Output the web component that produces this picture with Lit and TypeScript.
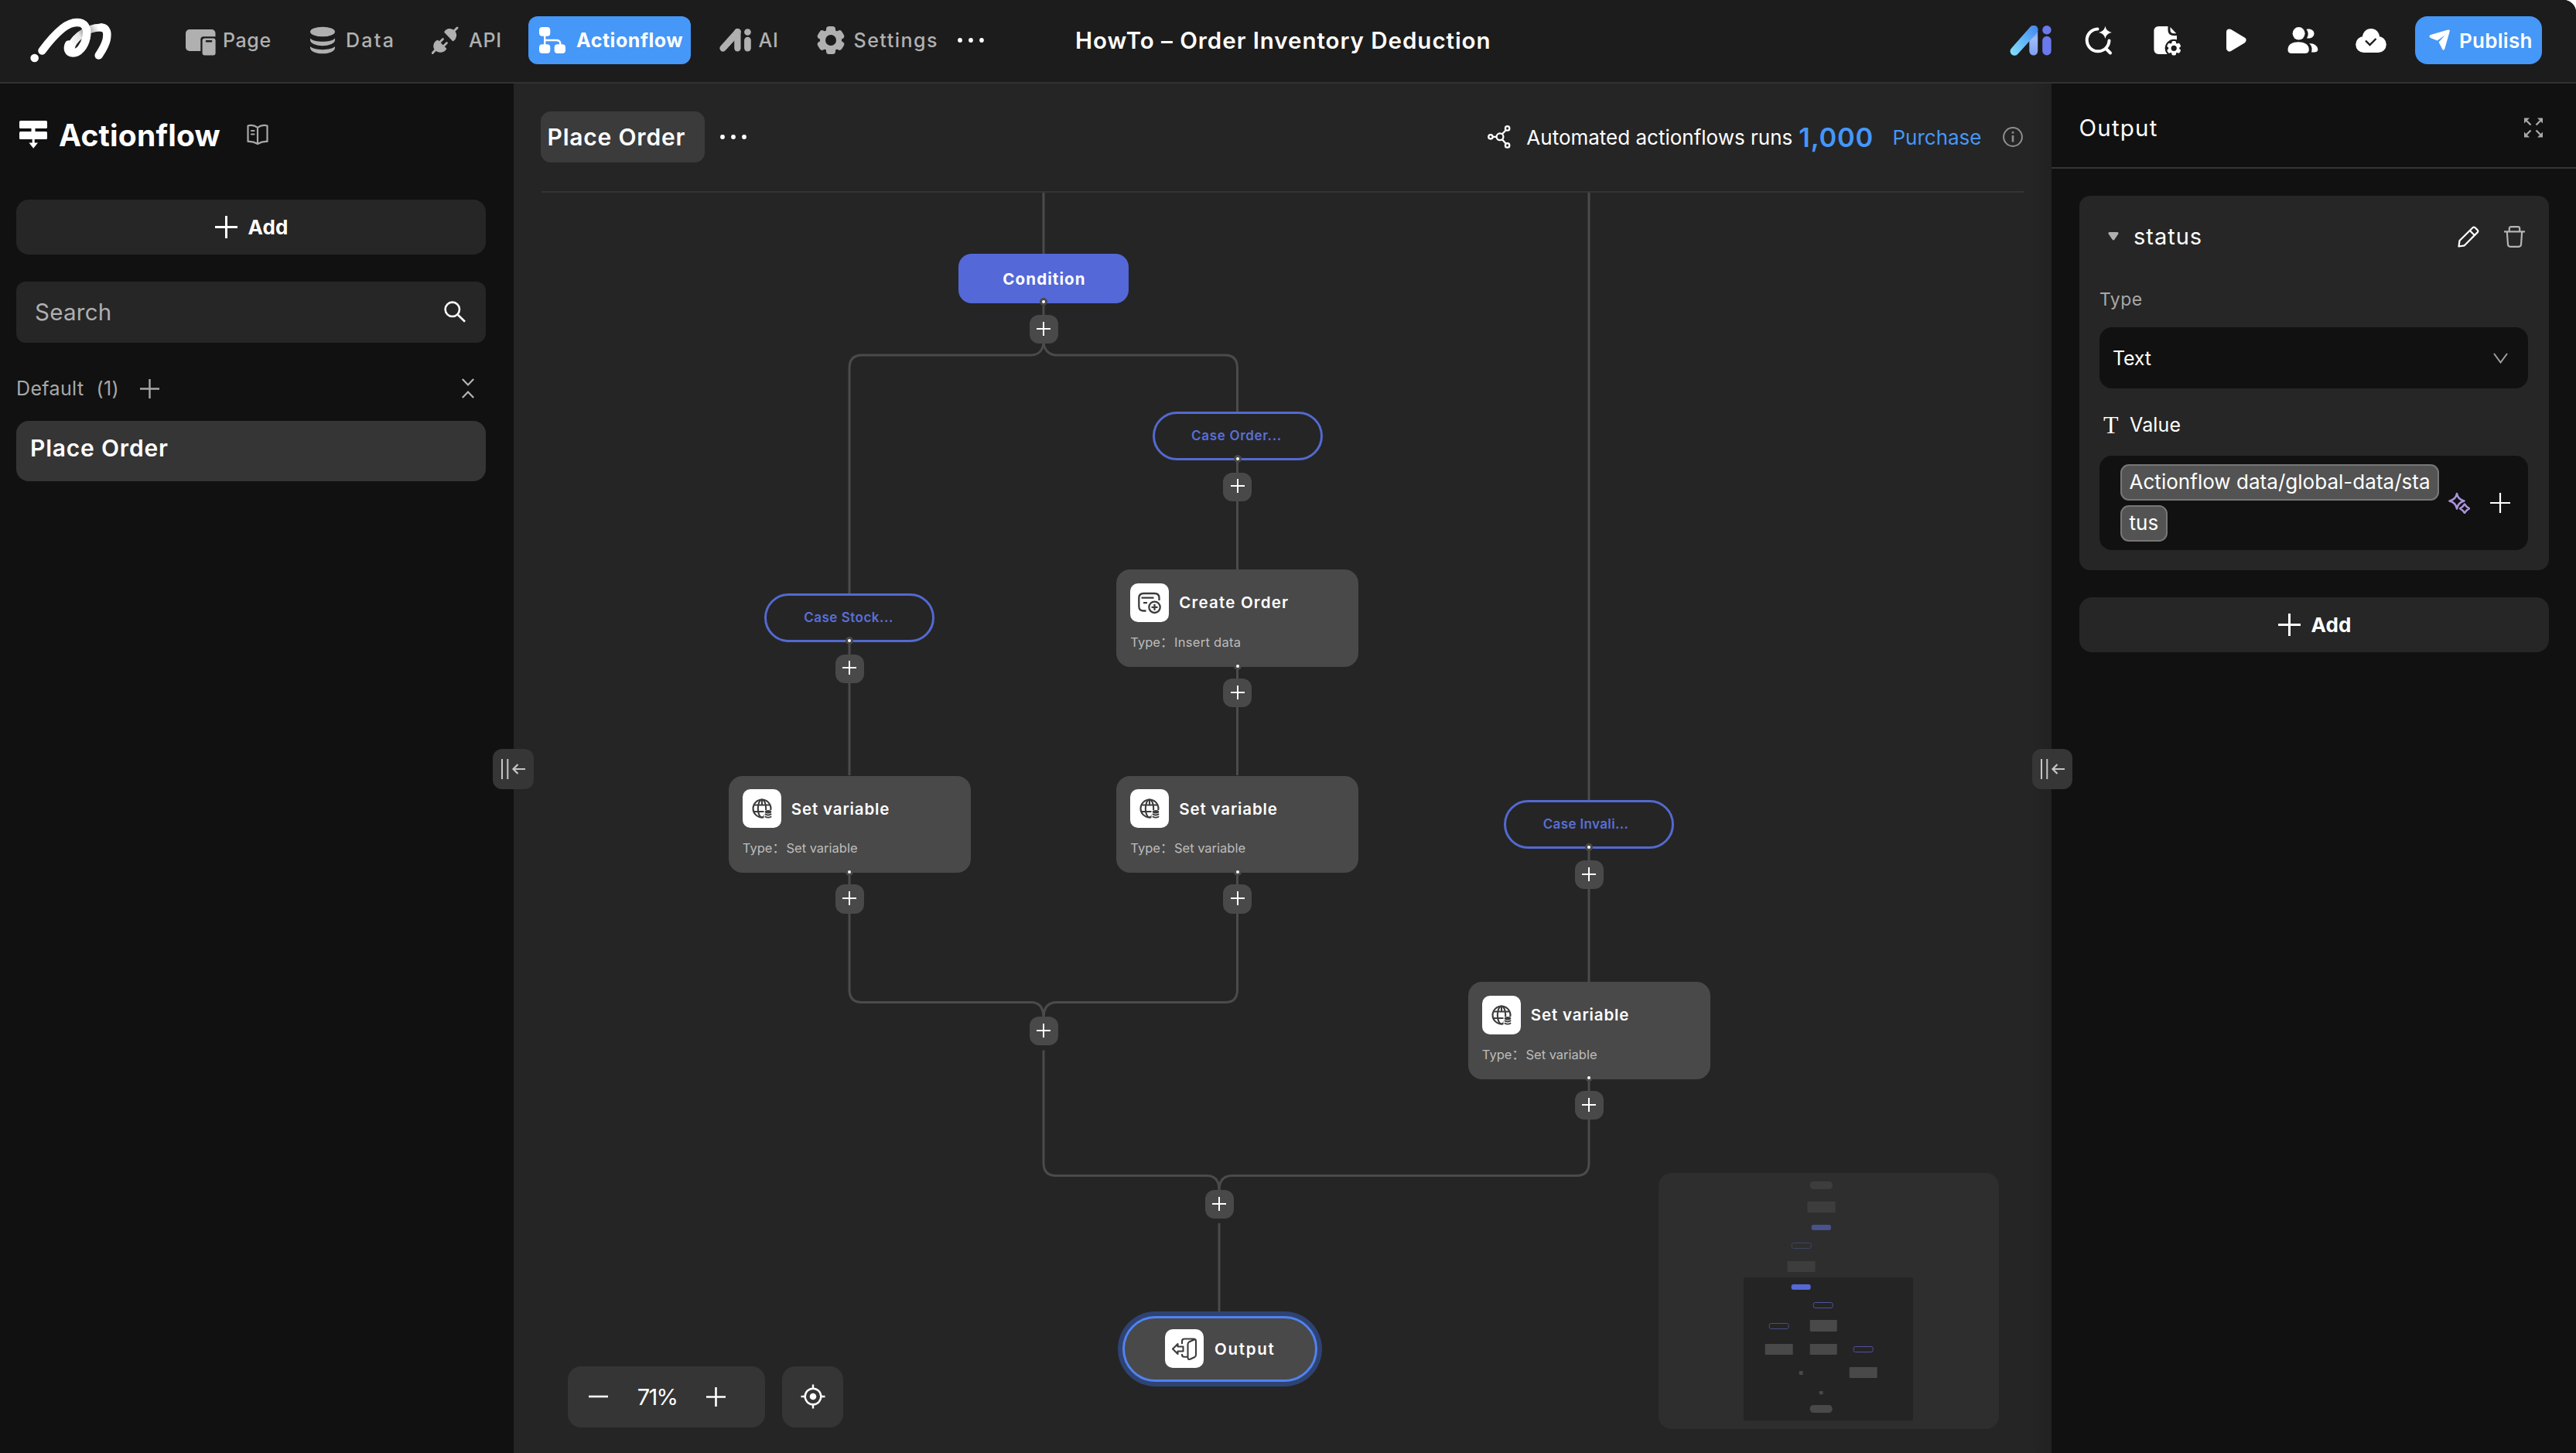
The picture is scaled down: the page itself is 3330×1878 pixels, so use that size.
import { LitElement, html, css, svg } from "lit";
import { customElement, property } from "lit/decorators.js";
import { styleMap } from "lit/directives/style-map.js";

/* ---------- icons ---------- */

const gearTeeth = (r: number, w: number) =>
  [0, 60, 120, 180, 240, 300].map(
    (a) => svg`<rect x=${-w / 2} y=${-r} width=${w} height=${r} rx=${w * 0.32} transform="rotate(${a})"></rect>`
  );

const aiMark = (w: number, h: number, diagonal: string, leg: string, dot: string) => html`
  <svg width=${w} height=${h} viewBox="0.6 4.8 41.4 30">
    <defs>
      <linearGradient id="aiDiag" x1="0" y1="1" x2="1" y2="0">
        <stop offset="0" stop-color="#86e2f8"></stop>
        <stop offset="0.55" stop-color="#5fb0f8"></stop>
        <stop offset="1" stop-color="#4482ee"></stop>
      </linearGradient>
      <linearGradient id="aiLeg" x1="0" y1="0" x2="0" y2="1">
        <stop offset="0" stop-color="#5a93f2"></stop>
        <stop offset="0.45" stop-color="#9fbcf6"></stop>
        <stop offset="1" stop-color="#7f9ff2"></stop>
      </linearGradient>
    </defs>
    <rect x="20" y="5" width="8.4" height="29.4" rx="4.2" fill=${leg}></rect>
    <path d="M1.9 27.6 L20.6 6.6 A4.3 4.3 0 0 1 28.2 10.6 Q27.6 12 26.4 13.4 L8.6 33 A4.3 4.3 0 0 1 1.9 27.6Z" fill=${diagonal}></path>
    <circle cx="37.4" cy="9.2" r="4.4" fill=${dot}></circle>
    <rect x="33" y="15.4" width="8.8" height="19" rx="4.4" fill=${dot}></rect>
  </svg>`;

const plus = (size: number, stroke: number) => html`
  <svg width=${size} height=${size} viewBox="0 0 ${size} ${size}">
    <path d="M${size / 2} 0V${size}M0 ${size / 2}H${size}" stroke="currentColor" stroke-width=${stroke} fill="none"></path>
  </svg>`;

const icons = {
  logo: html`<svg width="110" height="62" viewBox="36 21 110 62" fill="none" stroke-linecap="round">
    <defs>
      <linearGradient id="fold" gradientUnits="userSpaceOnUse" x1="92" y1="60" x2="132" y2="34">
        <stop offset="0" stop-color="#ffffff"></stop>
        <stop offset="0.35" stop-color="#e4e4e4"></stop>
        <stop offset="0.55" stop-color="#8c8c8c"></stop>
        <stop offset="0.85" stop-color="#f2f2f2"></stop>
        <stop offset="1" stop-color="#ffffff"></stop>
      </linearGradient>
    </defs>
    <path d="M92 62C92 54 108 35.600 131 35.400" stroke="url(#fold)" stroke-width="10"></path>
    <path d="M54.500 65.500C60 58 71 44.500 81 36.500C90 29.500 97 28.300 102.500 29.200C112 31 113.500 40 111.500 49C109 60 102 68.500 94.500 68.500C88 68.500 86.500 63 89 57.500" stroke="#fff" stroke-width="10.500"></path>
    <path d="M131 35.400C138.500 36 139.500 43 137.500 52C135.500 60 131.500 65.500 127.700 71.500" stroke="#fff" stroke-width="10.500"></path>
    <circle cx="44.700" cy="75" r="5.300" fill="#fff"></circle>
  </svg>`,
  page: html`<svg width="40" height="40" viewBox="0 0 40 40">
    <rect y="6" width="38.500" height="28" rx="5" fill="currentColor"></rect>
    <rect x="19.300" y="15.300" width="22" height="27" rx="4" fill="#1c1c1c"></rect>
    <rect x="21.600" y="17.600" width="17" height="21.800" rx="3" fill="currentColor"></rect>
    <rect x="25.800" y="20" width="8.500" height="2.600" rx="1" fill="#1c1c1c"></rect>
  </svg>`,
  data: html`<svg width="32" height="40" viewBox="0 0 32 40" fill="currentColor">
    <ellipse cx="16" cy="9" rx="16" ry="6.300"></ellipse>
    <path d="M0 17.500C5 23.300 27 23.300 32 17.500V20C31 29.500 1 29.500 0 20Z"></path>
    <path d="M0 28C5 33.500 27 33.500 32 28V30C31 39.800 1 39.800 0 30Z"></path>
  </svg>`,
  api: html`<svg width="36" height="40" viewBox="0 0 36 40" fill="currentColor" stroke="currentColor" stroke-linecap="round" stroke-linejoin="round">
    <path d="M17 9.500C19 5.500 25 4 29 8C33 12 31.500 18 27.500 20.500Z" stroke-width="1.500"></path>
    <path d="M8 20.500L18.500 31C15.500 35.500 9 36.500 5 32.500C1 28.500 3.500 22 8 20.500Z" stroke-width="1.500"></path>
    <path d="M29 8L33 4M5 32.500L1.200 36.500" stroke-width="3"></path>
    <path d="M10.500 22.500L14.500 18.500M15.500 27.500L19.500 23.500" stroke-width="2.800"></path>
  </svg>`,
  flow: html`<svg width="34" height="40" viewBox="0 0 34 40" fill="#fff">
    <rect y="3" width="14.300" height="11.800" rx="4"></rect>
    <rect y="25.300" width="14.300" height="11.800" rx="4"></rect>
    <rect x="19.700" y="25.300" width="14.300" height="11.800" rx="4"></rect>
    <path d="M7.200 12V27M7.200 20H22Q27.300 20 27.300 24.500V27" fill="none" stroke="#fff" stroke-width="2.400"></path>
  </svg>`,
  gear: html`<svg width="38" height="40" viewBox="-19 -20 38 40">
    <g fill="currentColor">${gearTeeth(18, 12)}<circle r="14"></circle></g>
    <circle r="7" fill="#1c1c1c"></circle>
  </svg>`,
  dots: html`<svg width="34" height="8" viewBox="0 0 34 8" fill="#fff">
    <circle cx="3" cy="4" r="2.900"></circle><circle cx="17" cy="4" r="2.900"></circle><circle cx="31" cy="4" r="2.900"></circle>
  </svg>`,
  refine: html`<svg width="40" height="40" viewBox="0 0 40 40" fill="none" stroke="#fff" stroke-width="4">
    <path d="M18.500 5.500A14.400 14.400 0 1 0 33.500 20.500" stroke-linecap="round"></path>
    <path d="M29.500 31L35 36.500" stroke-linecap="round"></path>
    <path d="M28.400 1.800Q29.500 8.500 36.800 9.900Q29.500 11.300 28.400 18Q27.300 11.300 20.200 9.900Q27.300 8.500 28.400 1.800Z" fill="#fff" stroke="none"></path>
  </svg>`,
  file: html`<svg width="40" height="40" viewBox="0 0 40 40">
    <path d="M9.500 2H21.500V7.500Q22 14 28.500 14H33V38H9.500Q3.400 38 3.400 31.500V8.500Q3.400 2 9.500 2Z" fill="#fff"></path>
    <path d="M24.500 3L32.300 11.200H28.500Q24.500 11 24.500 6.500Z" fill="#fff"></path>
    <g transform="translate(29.200 30.300)">
      <circle r="11.500" fill="#1c1c1c"></circle>
      <g fill="#fff">${gearTeeth(9.3, 5.6)}<circle r="7"></circle></g>
      <circle r="3.600" fill="#1c1c1c"></circle>
    </g>
  </svg>`,
  play: html`<svg width="40" height="40" viewBox="-1.500 0 40 40">
    <path d="M11.500 9.500L29 20L11.500 30.500Z" fill="#fff" stroke="#fff" stroke-width="8" stroke-linejoin="round"></path>
  </svg>`,
  users: html`<svg width="40" height="40" viewBox="0 0 40 40" fill="#fff">
    <ellipse cx="14.600" cy="11.300" rx="8" ry="8.300"></ellipse>
    <path d="M0.500 32C0.500 25 7 22.300 14 22.300C21 22.300 27.800 25 27.800 32C27.800 36 25.500 37 22 37H6C2.500 37 0.500 36 0.500 32Z"></path>
    <path d="M24.500 6C30 4.500 34.500 7.500 34.500 11.500C34.500 15.500 30.500 18.500 25 17.200C27.500 13.500 27.200 9.500 24.500 6Z"></path>
    <path d="M28 24C34.500 24 39.300 27.500 39.300 32C39.300 35 37 35.500 31 35.500C32.300 31 31.500 27 28 24Z"></path>
  </svg>`,
  cloud: html`<svg width="40" height="40" viewBox="0 0 40 40">
    <g fill="#fff"><circle cx="20" cy="16" r="11"></circle><circle cx="10.700" cy="25.500" r="10.500"></circle><circle cx="29.300" cy="25.500" r="10.500"></circle><rect x="10" y="20" width="20" height="16"></rect></g>
    <path d="M13 20.500L18.500 26L26.500 18" fill="none" stroke="#1c1c1c" stroke-width="2.400"></path>
  </svg>`,
  plane: html`<svg width="27" height="28" viewBox="0 0 27 28" fill="#fff">
    <path d="M2 7L24.500 0.600Q27.400 0 26.600 3L20.300 25Q19 28.300 17.200 25.500L12.600 16.600L20.600 7.400L10.700 14.600L2 10.900Q-1.200 8.800 2 7Z"></path>
  </svg>`,
  actionflow: html`<svg width="36" height="36" viewBox="0 0 36 36" fill="#fff">
    <rect width="36" height="10" rx="1.500"></rect>
    <rect y="14" width="36" height="10" rx="1.500"></rect>
    <path d="M15.500 9H20.500V15H15.500ZM16.700 23H19.700V28.500H24L18.200 35.800L12.400 28.500H16.700Z"></path>
  </svg>`,
  book: html`<svg width="28" height="28" viewBox="0 0 28 28" fill="none" stroke="#a8a8a8" stroke-width="2.200" stroke-linejoin="round" stroke-linecap="round">
    <path d="M14 4.800Q8 0.500 1.500 2.500V23Q8 22.500 14 26Q20 22.500 26.500 23V2.500Q20 0.500 14 4.800ZM14 4.800V26"></path>
    <path d="M6 9H9.500M6 13.500H9.500"></path>
  </svg>`,
  search: html`<svg width="28" height="28" viewBox="0 0 28 28" fill="none" stroke="#fff" stroke-width="2.600">
    <circle cx="10.800" cy="10.800" r="9.200"></circle><path d="M17.500 17.500L27 26.800"></path>
  </svg>`,
  collapse: html`<svg width="16" height="26" viewBox="0 0 16 26" fill="none" stroke="#b4b4b4" stroke-width="2.200">
    <path d="M0.800 0.900L8 8.400L15.200 0.900M0.800 25.100L8 17.600L15.200 25.100"></path>
  </svg>`,
  share: html`<svg width="30" height="30" viewBox="0 0 30 30" fill="none" stroke="#fff" stroke-width="2.300">
    <circle cx="3.900" cy="14.800" r="2.700"></circle><circle cx="16" cy="14.800" r="4.400"></circle>
    <circle cx="25.600" cy="3.900" r="2.700"></circle><circle cx="25.600" cy="25.900" r="2.700"></circle>
    <path d="M6.600 14.800H11.600M18.900 11.300L23.800 6M18.900 18.300L23.800 23.800"></path>
  </svg>`,
  info: html`<svg width="26" height="26" viewBox="0 0 26 26" fill="none" stroke="#8f8f8f">
    <circle cx="13" cy="13" r="11.900" stroke-width="2"></circle>
    <path d="M13 11V19.500M13 6V8.600" stroke-width="2.600"></path>
  </svg>`,
  expand: html`<svg width="24" height="26" viewBox="0 0 24 26" fill="#a8a8a8" stroke="#a8a8a8">
    <path d="M3 4L8.500 9.500M21 4L15.500 9.500M3 22L8.500 16.500M21 22L15.500 16.500" stroke-width="2.400"></path>
    <path d="M0 0.500H7L0 7.500ZM24 0.500H17L24 7.500ZM0 25.500H7L0 18.500ZM24 25.500H17L24 18.500Z" stroke="none"></path>
  </svg>`,
  edit: html`<svg width="28" height="28" viewBox="0 0 28 28" fill="none" stroke="#fff" stroke-width="2.200" stroke-linejoin="round">
    <path d="M1.500 26.500L2.500 19L19.500 2.300Q21 0.800 22.600 2.300L25.700 5.400Q27 6.900 25.600 8.400L8.800 25.300ZM15.800 6L22 12.200"></path>
  </svg>`,
  trash: html`<svg width="27" height="28" viewBox="0 0 27 28" fill="none" stroke="#b4b4b4" stroke-width="2.200">
    <path d="M0 7.300H27M6.800 7V3.500Q6.800 1.200 9 1.200H18Q20.200 1.200 20.200 3.500V7M3.800 7.500L5 24Q5.200 26.800 8 26.800H19Q21.800 26.800 22 24L23.200 7.500"></path>
  </svg>`,
  chevron: html`<svg width="19" height="14" viewBox="0 0 19 14" fill="none" stroke="#a0a0a0" stroke-width="2">
    <path d="M1 1L9.500 12.500L18 1"></path>
  </svg>`,
  caret: html`<svg width="14" height="11" viewBox="0 0 14 11" fill="#b0b0b0">
    <path d="M2 0H12Q14.500 0.300 13.200 2.600L8.500 9.600Q7 11.500 5.500 9.600L0.800 2.600Q-0.500 0.300 2 0Z"></path>
  </svg>`,
  sparkles: html`<svg width="28" height="28" viewBox="0 0 28 28" fill="none" stroke="#ab93df" stroke-width="2.500" stroke-linejoin="round">
    <path d="M11 2Q12.300 9.500 20.500 11.500Q12.300 13.500 11 21.500Q9.700 13.500 1.500 11.500Q9.700 9.500 11 2Z"></path>
    <path d="M21 15.500L23.500 18.800L27 21.300L23.500 23.800L21 27L18.500 23.800L15 21.300L18.500 18.800Z"></path>
  </svg>`,
  panel: html`<svg width="32" height="28" viewBox="0 0 32 28" fill="none" stroke="#c6c6c6" stroke-width="2">
    <path d="M2 1V27M9.300 1V27"></path><path d="M32 14H16.500M22.500 8L16.500 14L22.500 20" stroke-width="2.200"></path>
  </svg>`,
  locate: html`<svg width="34" height="34" viewBox="0 0 34 34" fill="none" stroke="#fff">
    <circle cx="17" cy="17" r="10.300" stroke-width="2.400"></circle><circle cx="17" cy="17" r="4.300" fill="#fff" stroke="none"></circle>
    <path d="M17 1.500V7M17 27V32.500M1.500 17H7M27 17H32.500" stroke-width="2.400"></path>
  </svg>`,
  insert: html`<svg width="50" height="50" viewBox="0 0 50 50" fill="none" stroke="#3c3c3c" stroke-width="2.300">
    <path d="M37.500 22V19Q37.500 13 31.500 13H17.500Q11.300 13 11.300 19V29.500Q11.300 35.500 17.500 35.500H20.500M14.500 18.700H30.500M17 25.200H22"></path>
    <circle cx="31.500" cy="30.800" r="7.200"></circle><path d="M31.500 26.800V34.800M27.500 30.800H35.500"></path>
  </svg>`,
  globe: html`<svg width="50" height="50" viewBox="0 0 50 50" fill="none" stroke="#3c3c3c" stroke-width="2.100">
    <circle cx="25" cy="25" r="11.500"></circle><ellipse cx="25" cy="25" rx="5.200" ry="11.500"></ellipse>
    <path d="M14.800 20.500H35.200M14.800 29H35.200M25 13.500V20"></path>
    <path d="M27.500 27H40V41H27.500Z" fill="#fff" stroke="none"></path>
    <ellipse cx="33" cy="29.200" rx="4.200" ry="2.300" fill="#3c3c3c" stroke="none"></ellipse>
    <path d="M28.800 32Q33 35 37.200 32M28.800 35.200Q33 38.200 37.200 35.200" stroke-width="1.800"></path>
  </svg>`,
  output: html`<svg width="50" height="50" viewBox="0 0 50 50" fill="none" stroke="#3c3c3c" stroke-width="2.100" stroke-linejoin="round">
    <path d="M22 19V15.500Q22 12.500 25 12.500H37Q40 12.500 40 15.500V33Q40 35 38.500 36L32.500 38.800Q29.500 39.500 29.500 36.500V19.500Q29.500 17.500 31 16.500L38.800 13M22 32V33Q22 35.800 25 35.800H29.500"></path>
    <path d="M10 25.500L16.500 19V22.500H23.500V28.500H16.500V32Z"></path>
  </svg>`,
};

/* ---------- flow data ---------- */

type Kind = "condition" | "case" | "card" | "output";
interface FlowNode { kind: Kind; x: number; y: number; title: string; type?: string; icon?: "insert" | "globe"; cls?: string; }

const NODES: FlowNode[] = [
  { kind: "condition", x: 575, y: 79, title: "Condition" },
  { kind: "case", x: 825.5, y: 283, title: "Case Order...", cls: "order" },
  { kind: "case", x: 324, y: 518, title: "Case Stock...", cls: "stock" },
  { kind: "case", x: 1280, y: 785, title: "Case Invali...", cls: "invalid" },
  { kind: "card", x: 779, y: 487, title: "Create Order", type: "Insert data", icon: "insert", cls: "create" },
  { kind: "card", x: 277.5, y: 753.5, title: "Set variable", type: "Set variable", icon: "globe" },
  { kind: "card", x: 779, y: 753.5, title: "Set variable", type: "Set variable", icon: "globe" },
  { kind: "card", x: 1233.5, y: 1020, title: "Set variable", type: "Set variable", icon: "globe" },
  { kind: "output", x: 786.5, y: 1451.5, title: "Output" },
];

const HANDLES: [number, number][] = [
  [685, 140.8], [935.5, 344.4], [434, 579], [935.5, 611.5], [434, 877.5],
  [935.5, 877.5], [1390, 845.6], [1390, 1143.7],
];

const ADD_BUTTONS: [number, number][] = [
  [685, 176.5], [935.5, 380.3], [434, 615.3], [935.5, 646.5], [434, 913],
  [935.5, 913], [685, 1083.5], [1390, 881.5], [1390, 1179.5], [912, 1307.5],
];

const EDGES = [
  "M685 0V79M685 141V160",
  "M685 192C685 203 679 210 669 210H450Q434 210 434 227V518",
  "M685 192C685 203 692 210 702 210H920Q935.500 210 935.500 227V283",
  "M935.500 346V487M935.500 612V753",
  "M434 580V753M434 878V1030Q434 1046.500 450 1046.500H669Q685 1046.500 685 1067",
  "M935.500 878V1030Q935.500 1046.500 920 1046.500H702Q685 1046.500 685 1067",
  "M685 1108.500V1254Q685 1270.500 701 1270.500H896Q912 1270.500 912 1290",
  "M1390 0V785M1390 847V1020M1390 1145V1254Q1390 1270.500 1374 1270.500H929Q912 1270.500 912 1290",
  "M912 1332V1452",
];

@customElement("flow-node")
class FlowNodeElement extends LitElement {
  @property({ attribute: false }) node!: FlowNode;

  static styles = css`
    :host { display: block; font-family: Inter, "Noto Sans CJK SC", sans-serif; color: #fff; }
    svg { display: block; }
    .condition, .case { display: flex; align-items: center; justify-content: center; box-sizing: border-box; width: 220px; height: 63px; white-space: nowrap; }
    .condition { background: #5468d8; border-radius: 17px; font-size: 20.500px; font-weight: 700; letter-spacing: 1.1px; height: 64px; padding-left: 2px; }
    .case { border: 3px solid #5469d0; border-radius: 32px; background: #252525; color: #596fd8; font-size: 17px; font-weight: 600; padding: 0 2px 1px 0; }
    .order { letter-spacing: 0.68px; }
    .stock { letter-spacing: 0.51px; }
    .invalid { letter-spacing: 0.36px; padding-right: 8px; }
    .card { box-sizing: border-box; width: 313px; height: 125.500px; padding: 17.500px 18.300px; border-radius: 18px; background: #494949; }
    .head { display: flex; align-items: center; gap: 13px; }
    .tile { width: 50px; height: 50px; border-radius: 10px; background: #fff; flex: none; }
    .title { font-size: 20.500px; font-weight: 600; letter-spacing: 0.85px; white-space: nowrap; }
    .create .title { letter-spacing: 1.2px; }
    .type { margin-top: 14px; line-height: 24px; font-size: 16.500px; color: #bdbdbd; white-space: nowrap; }
    .value { margin-left: 1.500px; }
    .create .value { letter-spacing: 0.3px; }
    .output { box-sizing: border-box; display: flex; align-items: center; width: 252px; height: 85.500px; padding-left: 52.500px; gap: 14px; border: 3px solid #5083f2; border-radius: 43px; background: #494949; box-shadow: 0 0 0 6px #2f4372; }
    .output .title { letter-spacing: 1.7px; }
  `;

  render() {
    const n = this.node;
    if (n.kind === "condition") return html`<div class="condition">${n.title}</div>`;
    if (n.kind === "case") return html`<div class="case ${n.cls}">${n.title}</div>`;
    if (n.kind === "output")
      return html`<div class="output"><div class="tile">${icons.output}</div><span class="title">${n.title}</span></div>`;
    return html`<div class="card ${n.cls ?? ""}">
      <div class="head"><div class="tile">${icons[n.icon!]}</div><span class="title">${n.title}</span></div>
      <div class="type">Type：<span class="value">${n.type}</span></div>
    </div>`;
  }
}

const MINI_DIM: [number, number, number, number, number, string][] = [
  [660, 111, 88, 30, 14, "#3d3d3d"], [650, 189, 109, 43, 3, "#3d3d3d"], [666, 279, 76, 21, 8, "#48528f"], [572, 420, 109, 42, 3, "#3d3d3d"],
];
const MINI_LIT: [number, number, number, number, number, string][] = [
  [588, 510, 75, 21, 8, "#5468d8"], [660, 648, 105, 45, 3, "#494949"], [486, 741, 108, 42, 3, "#494949"], [660, 741, 105, 42, 3, "#494949"],
  [813, 831, 108, 42, 3, "#494949"], [618, 846, 15, 15, 3, "#494949"], [696, 924, 15, 13, 3, "#494949"], [660, 978, 87, 30, 14, "#494949"],
];
const MINI_OUTLINE: [number, number, string][] = [
  [589.5, 349.5, "#3f4465"], [673.5, 580.5, "#4d549a"], [502.5, 661.5, "#454f88"], [829.5, 751.5, "#5450a0"],
];

@customElement("mini-map")
class MiniMap extends LitElement {
  static styles = css`:host { display: block; } svg { display: block; }`;
  render() {
    const bars = (list: typeof MINI_DIM) =>
      list.map(([x, y, w, h, r, f]) => svg`<rect x=${x} y=${y} width=${w} height=${h} rx=${r} fill=${f}></rect>`);
    return html`<svg width="440" height="331" viewBox="73 78 1320 993">
      <rect x="73" y="78" width="1320" height="993" rx="50" fill="#2e2e2e"></rect>
      ${bars(MINI_DIM)}
      <rect x="403" y="483" width="657" height="556" rx="6" fill="#242424"></rect>
      ${bars(MINI_LIT)}
      ${MINI_OUTLINE.map(([x, y, c]) => svg`<rect x=${x} y=${y} width="75" height="21" rx="7" fill="none" stroke=${c} stroke-width="3"></rect>`)}
    </svg>`;
  }
}

@customElement("flow-canvas")
class FlowCanvas extends LitElement {
  static styles = css`
    :host { display: block; position: relative; overflow: hidden; flex: 1; color: #fff; font-family: Inter, sans-serif; }
    svg { display: block; }
    .edges { position: absolute; inset: 0; }
    .at { position: absolute; }
    .add { position: absolute; display: flex; align-items: center; justify-content: center; box-sizing: border-box; width: 37px; height: 37.500px; margin: -18.750px 0 0 -18.500px; padding-bottom: 2px; border-radius: 12px; background: #494949; }
    .dot { position: absolute; box-sizing: border-box; width: 10px; height: 10px; margin: -5px 0 0 -5px; border: 3px solid #494949; border-radius: 50%; background: #fff; }
    .tools { position: absolute; left: 70px; bottom: 33px; display: flex; gap: 22px; }
    .zoom, .locate { display: flex; align-items: center; height: 79px; border-radius: 17px; background: #353535; box-sizing: border-box; padding-bottom: 1px; }
    .zoom { width: 255px; padding-left: 27px; }
    .pct { width: 127px; text-align: center; font-size: 29px; letter-spacing: -1.700px; box-sizing: border-box; }
    .locate { width: 79px; justify-content: center; }
    mini-map { position: absolute; right: 68px; bottom: 31px; }
  `;
  render() {
    const pos = (x: number, y: number) => styleMap({ left: `${x}px`, top: `${y}px` });
    return html`
      <svg class="edges" width="1988" height="1629" viewBox="0 0 1988 1629" fill="none" stroke="#4b4b4b" stroke-width="3">
        ${EDGES.map((d) => svg`<path d=${d}></path>`)}
      </svg>
      ${NODES.map((n) => html`<flow-node class="at" style=${pos(n.x, n.y)} .node=${n}></flow-node>`)}
      ${HANDLES.map(([x, y]) => html`<i class="dot" style=${pos(x, y)}></i>`)}
      ${ADD_BUTTONS.map(([x, y]) => html`<div class="add" style=${pos(x, y)}>${plus(18, 2)}</div>`)}
      <div class="tools">
        <div class="zoom">
          <svg width="25" height="4" viewBox="0 0 25 4"><path d="M0 2H25" stroke="#fff" stroke-width="2.600"></path></svg>
          <span class="pct">71%</span>
          ${plus(25, 2.6)}
        </div>
        <div class="locate">${icons.locate}</div>
      </div>
      <mini-map></mini-map>`;
  }
}

/* ---------- shell ---------- */

@customElement("app-root")
class AppRoot extends LitElement {
  static styles = css`
    :host { display: block; width: 3330px; height: 1878px; background: #fff; font-family: Inter, "Noto Sans", sans-serif; color: #fff; }
    svg { display: block; flex: none; }
    .window { display: flex; flex-direction: column; height: 100%; overflow: hidden; border-top-right-radius: 16px; background: #111; }

    .topbar { box-sizing: border-box; height: 108px; flex: none; display: flex; align-items: center; padding-bottom: 2px; border-bottom: 2px solid #313131; background: #1c1c1c; white-space: nowrap; }
    .nav { display: grid; grid-template-columns: 204px 161px 157px 125px 246.500px 125.500px 183px 153px; align-items: center; padding-left: 36px; }
    .item { display: flex; align-items: center; color: #b0b0b0; font-size: 25px; font-weight: 500; }
    .page { gap: 8px; letter-spacing: 0.600px; }
    .data { gap: 14px; letter-spacing: 2.300px; }
    .api { gap: 12px; letter-spacing: 0.700px; }
    .ai { gap: 10px; letter-spacing: 0.700px; }
    .settings { gap: 10.500px; letter-spacing: 1.500px; }
    .active { box-sizing: border-box; width: 210px; height: 62px; padding-left: 14px; gap: 14px; border-radius: 12px; background: #4597f8; color: #fff; font-weight: 700; letter-spacing: 0.550px; }
    .doc { font-size: 29.500px; font-weight: 600; letter-spacing: 0.960px; margin-left: -1px; flex: 1; }
    .actions { display: flex; align-items: center; }
    .action { width: 88px; display: flex; justify-content: center; }
    .publish { box-sizing: border-box; display: flex; align-items: center; gap: 12px; width: 164px; height: 62px; margin: 0 44px 0 13px; padding-left: 18px; border-radius: 16px; background: #4597f8; font-size: 26px; font-weight: 600; letter-spacing: 0.280px; }

    .body { display: flex; flex: 1; min-height: 0; }
    .sidebar { box-sizing: border-box; width: 664px; flex: none; display: flex; flex-direction: column; padding: 0 36px 0 21px; background: #111; }
    .brand { display: flex; align-items: center; height: 132px; padding-left: 4px; }
    .brand h1 { margin: 0 34px 0 15px; font-size: 39px; font-weight: 700; letter-spacing: 0.200px; }
    .add { display: flex; align-items: center; justify-content: center; gap: 13px; height: 71px; padding-left: 2px; border-radius: 16px; background: #262626; font-size: 26px; font-weight: 700; letter-spacing: 0.200px; box-sizing: border-box; }
    .sidebar .add { margin-top: 18px; }
    .search { box-sizing: border-box; display: flex; align-items: center; justify-content: space-between; height: 79px; margin-top: 35px; padding: 0 26px 2px 24px; border-radius: 12px; background: #262626; color: #b0b0b0; font-size: 29.500px; letter-spacing: 0.260px; }
    .group { display: flex; align-items: center; height: 79px; margin-top: 20px; padding-bottom: 1px; box-sizing: border-box; color: #a8a8a8; font-size: 25px; letter-spacing: 0.360px; }
    .count { margin: 0 27px 0 16px; }
    .group .fold { margin-left: auto; margin-right: 15px; }
    .flow { box-sizing: border-box; height: 78px; margin-top: 2px; padding: 0 0 8px 18px; display: flex; align-items: center; border-radius: 16px; background: #353535; font-size: 30px; font-weight: 600; letter-spacing: 0.800px; }

    .main { width: 1988px; flex: none; display: flex; flex-direction: column; position: relative; background: #252525; }
    .head { box-sizing: border-box; height: 141px; flex: none; display: flex; align-items: center; margin: 0 35px 0 36px; padding-bottom: 1px; border-bottom: 2px solid #343434; white-space: nowrap; font-size: 26px; }
    .name { box-sizing: border-box; display: flex; align-items: center; width: 212px; height: 66px; margin: 0 20px 0 -1px; padding: 0 0 1px 8.500px; border-radius: 13px; background: #3b3b3b; font-size: 30px; font-weight: 600; letter-spacing: 0.800px; }
    .runs { display: flex; align-items: center; margin-left: auto; margin-right: 2.500px; }
    .runs .label { margin-left: 20px; }
    .quota { color: #4597f8; font-size: 34.500px; font-weight: 600; letter-spacing: 0.750px; margin-left: 8px; }
    .buy { color: #4597f8; margin: 0 27px 0 24.500px; }
    .shade { position: absolute; top: 0; right: 0; bottom: 0; width: 28px; background: linear-gradient(to right, rgba(0, 0, 0, 0), rgba(0, 0, 0, 0.1)); }
    .toggle { position: absolute; top: 860px; width: 52.500px; height: 52px; display: flex; align-items: center; justify-content: center; border-radius: 12px; background: #363636; z-index: 1; }
    .toggle.left { left: -27px; }
    .toggle.right { right: -27px; }

    .panel { flex: 1; display: flex; flex-direction: column; background: #111; }
    .title { box-sizing: border-box; height: 110px; display: flex; align-items: center; justify-content: space-between; padding: 6px 43px 0 35.500px; border-bottom: 2px solid #353535; font-size: 29.500px; letter-spacing: 1.200px; }
    .content { padding: 34.500px 35px 0 36px; }
    .card { box-sizing: border-box; height: 484.500px; padding: 0 27px 0 26px; border-radius: 14px; background: #262626; }
    .row { display: flex; align-items: center; height: 106px; padding: 0 4px 0 11px; }
    .row .field { margin: 0 auto 0 19px; font-size: 29px; letter-spacing: 1px; }
    .row svg + svg { margin-left: 32px; }
    .caption { height: 64.500px; display: flex; align-items: center; padding-bottom: 8px; box-sizing: border-box; font-size: 23px; letter-spacing: 0.450px; color: #a8a8a8; }
    .select { box-sizing: border-box; height: 79px; display: flex; align-items: center; justify-content: space-between; padding: 0 26px 0 17px; border-radius: 16px; background: #111; font-size: 25px; letter-spacing: -0.200px; }
    .value { display: flex; align-items: center; height: 86.500px; padding: 7px 0 0 5px; font-size: 25px; letter-spacing: 0.150px; box-sizing: border-box; }
    .serif { width: 20px; font-family: "Liberation Serif", serif; font-size: 32px; margin-right: 14px; line-height: 1; letter-spacing: 0; }
    .input { box-sizing: border-box; height: 122.500px; display: flex; align-items: center; padding: 0 23px 0 27px; border-radius: 16px; background: #111; }
    .chips { display: flex; flex-direction: column; align-items: flex-start; gap: 6.500px; margin-right: auto; }
    .chip { box-sizing: border-box; height: 46.500px; display: flex; align-items: center; padding: 0 9.500px 2px; border: 2px solid #777; border-radius: 11px; background: #535353; font-size: 26px; letter-spacing: 0.030px; white-space: nowrap; }
    .input svg + svg { margin-left: 26px; }
    .content .add { margin-top: 35px; }
  `;

  render() {
    return html`<div class="window">
      <header class="topbar">
        <nav class="nav">
          ${icons.logo}
          <div class="item page">${icons.page}<span>Page</span></div>
          <div class="item data">${icons.data}<span>Data</span></div>
          <div class="item api">${icons.api}<span>API</span></div>
          <div class="item active">${icons.flow}<span>Actionflow</span></div>
          <div class="item ai">${aiMark(41, 30, "currentColor", "currentColor", "currentColor")}<span>AI</span></div>
          <div class="item settings">${icons.gear}<span>Settings</span></div>
          ${icons.dots}
        </nav>
        <div class="doc">HowTo – Order Inventory Deduction</div>
        <div class="actions">
          <div class="action">${aiMark(54, 39, "url(#aiDiag)", "url(#aiLeg)", "#6b79ef")}</div>
          <div class="action">${icons.refine}</div>
          <div class="action">${icons.file}</div>
          <div class="action">${icons.play}</div>
          <div class="action">${icons.users}</div>
          <div class="action">${icons.cloud}</div>
          <div class="publish">${icons.plane}<span>Publish</span></div>
        </div>
      </header>
      <div class="body">
        <aside class="sidebar">
          <div class="brand">${icons.actionflow}<h1>Actionflow</h1>${icons.book}</div>
          <div class="add">${plus(29, 3)}<span>Add</span></div>
          <div class="search"><span>Search</span>${icons.search}</div>
          <div class="group"><span>Default</span><span class="count">(1)</span>${plus(25, 2.4)}<div class="fold">${icons.collapse}</div></div>
          <div class="flow">Place Order</div>
        </aside>
        <main class="main">
          <div class="head">
            <div class="name">Place Order</div>
            ${icons.dots}
            <div class="runs">
              ${icons.share}<span class="label">Automated actionflows runs</span><span class="quota">1,000</span><span class="buy">Purchase</span>${icons.info}
            </div>
          </div>
          <flow-canvas></flow-canvas>
          <div class="shade"></div>
          <div class="toggle left">${icons.panel}</div>
          <div class="toggle right">${icons.panel}</div>
        </main>
        <aside class="panel">
          <div class="title"><span>Output</span>${icons.expand}</div>
          <div class="content">
            <div class="card">
              <div class="row">${icons.caret}<span class="field">status</span>${icons.edit}${icons.trash}</div>
              <div class="caption">Type</div>
              <div class="select"><span>Text</span>${icons.chevron}</div>
              <div class="value"><span class="serif">T</span><span>Value</span></div>
              <div class="input">
                <div class="chips"><span class="chip">Actionflow data/global-data/sta</span><span class="chip">tus</span></div>
                ${icons.sparkles}${plus(26, 2.2)}
              </div>
            </div>
            <div class="add">${plus(29, 3)}<span>Add</span></div>
          </div>
        </aside>
      </div>
    </div>`;
  }
}
